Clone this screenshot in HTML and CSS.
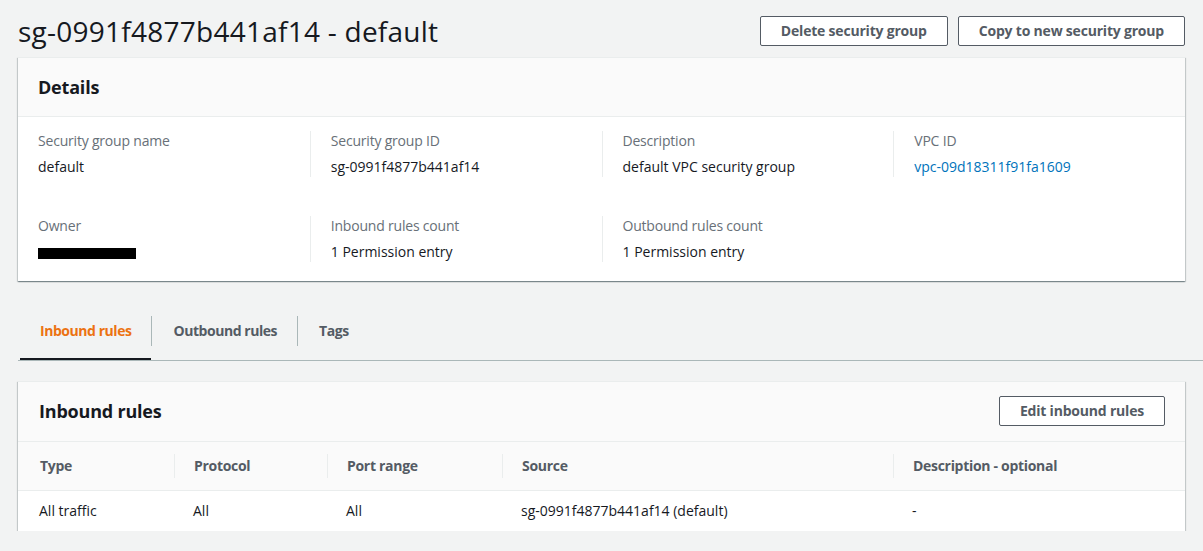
FILE: index.html
```html
<!DOCTYPE html>
<html lang="en">
<head>
<meta charset="utf-8">
<title>sg-0991f4877b441af14 - default</title>
<link rel="stylesheet" href="styles.css">
</head>
<body>
<main class="page">
  <header class="page-header">
    <h1 class="page-title">sg-0991f4877b441af14 - default</h1>
    <div class="actions">
      <button class="btn">Delete security group</button>
      <button class="btn">Copy to new security group</button>
    </div>
  </header>

  <section class="card">
    <div class="card-header">
      <h2 class="card-title">Details</h2>
    </div>
    <div class="details">
      <div class="field">
        <div class="label">Security group name</div>
        <div class="value">default</div>
      </div>
      <div class="field sep">
        <div class="label">Security group ID</div>
        <div class="value">sg-0991f4877b441af14</div>
      </div>
      <div class="field sep">
        <div class="label">Description</div>
        <div class="value">default VPC security group</div>
      </div>
      <div class="field sep">
        <div class="label">VPC ID</div>
        <div class="value"><a class="link" href="#">vpc-09d18311f91fa1609</a></div>
      </div>
      <div class="field">
        <div class="label">Owner</div>
        <div class="value"><span class="redacted"></span></div>
      </div>
      <div class="field sep">
        <div class="label">Inbound rules count</div>
        <div class="value">1 Permission entry</div>
      </div>
      <div class="field sep">
        <div class="label">Outbound rules count</div>
        <div class="value">1 Permission entry</div>
      </div>
    </div>
  </section>

  <nav class="tabs">
    <a class="tab active" href="#"><span class="tab-inner">Inbound rules</span></a>
    <a class="tab" href="#"><span class="tab-inner divided">Outbound rules</span></a>
    <a class="tab" href="#"><span class="tab-inner divided">Tags</span></a>
  </nav>

  <section class="card rules-card">
    <div class="card-header with-action">
      <h2 class="card-title">Inbound rules</h2>
      <button class="btn">Edit inbound rules</button>
    </div>
    <table class="rules">
      <colgroup>
        <col class="c1"><col class="c2"><col class="c3"><col class="c4"><col class="c5">
      </colgroup>
      <thead>
        <tr>
          <th><div class="th-inner first">Type</div></th>
          <th><div class="th-inner">Protocol</div></th>
          <th><div class="th-inner">Port range</div></th>
          <th><div class="th-inner">Source</div></th>
          <th><div class="th-inner">Description - optional</div></th>
        </tr>
      </thead>
      <tbody>
        <tr>
          <td class="first">All traffic</td>
          <td>All</td>
          <td>All</td>
          <td>sg-0991f4877b441af14 (default)</td>
          <td>-</td>
        </tr>
      </tbody>
    </table>
  </section>
</main>
</body>
</html>
```

FILE: styles.css
```css
* { box-sizing: border-box; }

html, body {
  margin: 0;
  padding: 0;
}

body {
  background: #f2f3f3;
  font-family: "Open Sans", "Noto Sans", Arial, sans-serif;
  font-size: 14px;
  line-height: 20px;
  color: #16191f;
}

.page {
  padding: 0 18px;
}

.page-header {
  display: flex;
  align-items: center;
  justify-content: space-between;
  padding-top: 13px;
  height: 49px;
}

.page-title {
  margin: 0;
  font-size: 28px;
  line-height: 36px;
  font-weight: 400;
  color: #16191f;
  letter-spacing: 0.25px;
}

.actions {
  display: flex;
  gap: 10px;
  margin-bottom: 1px;
}

.btn {
  font-family: inherit;
  font-size: 14px;
  font-weight: 700;
  line-height: 20px;
  color: #545b64;
  background: #ffffff;
  border: 1px solid #545b64;
  border-radius: 2px;
  padding: 4px 20px;
  height: 30px;
  letter-spacing: -0.2px;
}

.card {
  margin-top: 8px;
  background: #ffffff;
  border-top: 1px solid #eaeded;
  box-shadow: 0 1px 1px 0 rgba(0, 28, 36, 0.3),
              1px 1px 1px 0 rgba(0, 28, 36, 0.15),
              -1px 1px 1px 0 rgba(0, 28, 36, 0.15);
}

.card-header {
  background: #fafafa;
  border-bottom: 1px solid #eaeded;
  padding: 18px 20px;
  display: flex;
  align-items: center;
  justify-content: space-between;
}

.card-title {
  margin: 0;
  font-size: 18px;
  line-height: 22px;
  font-weight: 700;
  color: #16191f;
  letter-spacing: -0.2px;
}

.details {
  display: grid;
  grid-template-columns: repeat(4, 1fr);
  row-gap: 39px;
  padding: 14px 0 19px;
}

.field {
  padding-left: 20px;
}

.field.sep {
  border-left: 1px solid #eaeded;
}

.label {
  color: #687078;
  line-height: 20px;
  margin-bottom: 6px;
  letter-spacing: -0.2px;
}

.value {
  line-height: 20px;
}

.link {
  color: #0073bb;
  text-decoration: none;
}

.redacted {
  display: inline-block;
  width: 98px;
  height: 11px;
  background: #000000;
  vertical-align: middle;
}

.tabs {
  margin-top: 21px;
  margin-right: -18px;
  padding-left: 2px;
  display: flex;
  border-bottom: 1px solid #aab7b8;
}

.tab {
  position: relative;
  display: block;
  padding: 14px 0;
  text-decoration: none;
  color: #545b64;
  font-weight: 700;
  letter-spacing: -0.45px;
}

.tab-inner {
  display: block;
  height: 30px;
  line-height: 30px;
  padding: 0 20px;
}

.tab-inner.divided {
  border-left: 1px solid #aab7b8;
  padding-left: 21px;
}

.tab.active {
  color: #ec7211;
}

.tab.active::after {
  content: "";
  position: absolute;
  left: 0;
  right: 0;
  bottom: 0;
  height: 2px;
  background: #16191f;
}

.rules-card {
  margin-top: 20px;
}

.card-header.with-action {
  padding: 14px 20px 15px 21px;
}

.rules {
  width: 100%;
  border-collapse: collapse;
  table-layout: fixed;
}

.c1 { width: 156px; }
.c2 { width: 153px; }
.c3 { width: 175px; }
.c4 { width: 391px; }
.c5 { width: 292px; }

.rules th {
  background: #fafafa;
  border-bottom: 1px solid #eaeded;
  padding: 12px 0;
  text-align: left;
  font-weight: 700;
  color: #545b64;
  letter-spacing: -0.3px;
}

.th-inner {
  border-left: 1px solid #eaeded;
  padding-left: 19px;
  height: 24px;
  line-height: 24px;
}

.th-inner.first {
  border-left: none;
  padding-left: 22px;
}

.rules td {
  padding: 10px 0 10px 19px;
  line-height: 20px;
  color: #16191f;
}

.rules td.first {
  padding-left: 21px;
}
```
